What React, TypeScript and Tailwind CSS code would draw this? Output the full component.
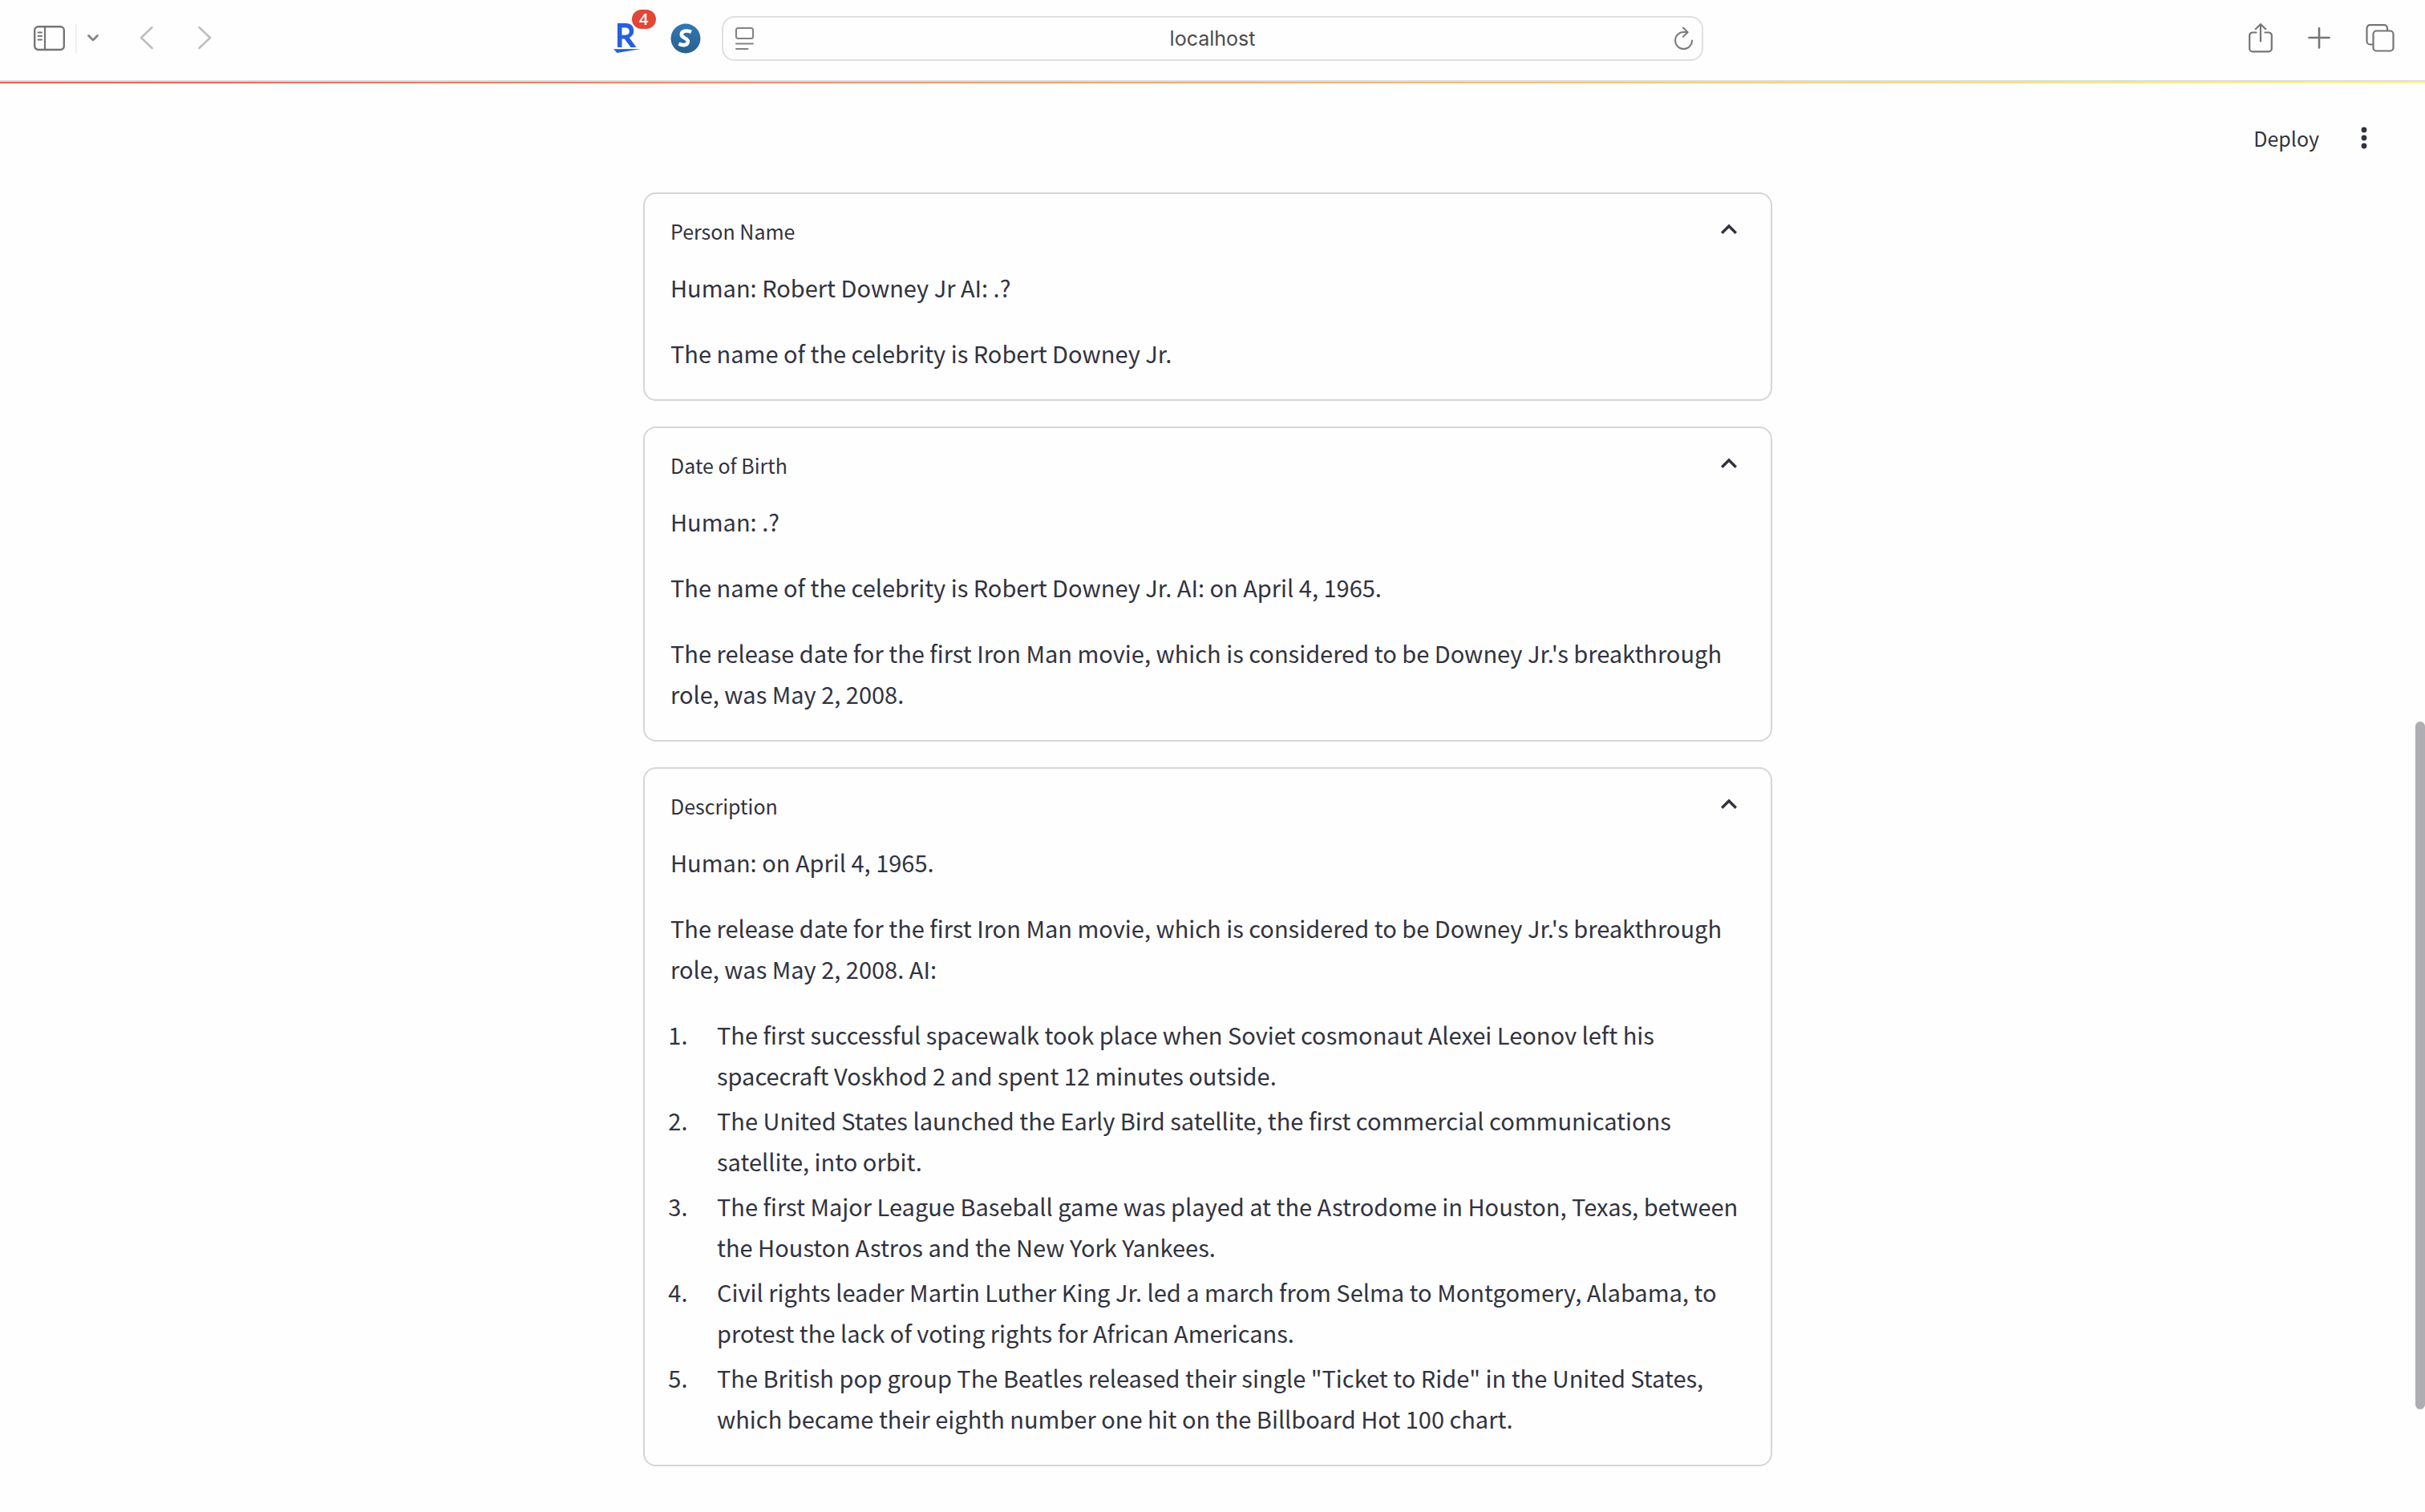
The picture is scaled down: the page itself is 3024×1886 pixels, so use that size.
import React from "react";

type CardProps = { title: string; children: React.ReactNode };

function Card({ title, children }: CardProps) {
  return (
    <details open className="rounded-2xl border-2 border-[#d6d6d8] px-8 pb-8">
      <summary className="flex h-[91px] cursor-pointer list-none items-center justify-between text-[25px] leading-[44px]">
        <span>{title}</span>
        <svg viewBox="0 0 40 40" className="size-10" fill="none" stroke="currentColor" strokeWidth="3.4">
          <path d="M11.200 22.800 20 14l8.800 8.800" />
        </svg>
      </summary>
      <div className="flex flex-col gap-[31px] text-[29px] leading-[51px]">{children}</div>
    </details>
  );
}

function SidebarIcon() {
  return (
    <svg viewBox="0 0 40 32" className="h-8 w-10" fill="none" stroke="#757575">
      <rect x="1.200" y="1.200" width="36.600" height="28.800" rx="4.500" strokeWidth="2.400" />
      <path d="M14 1v29" strokeWidth="2.200" />
      <path d="M5.500 8.500h4.600M5.500 13h4.600M5.500 17.500h4.600" strokeWidth="1.800" strokeLinecap="round" />
    </svg>
  );
}

function RakutenIcon() {
  return (
    <svg viewBox="0 0 36 40" className="h-10 w-9">
      <path
        fill="#265fe0"
        fillRule="evenodd"
        d="M6 1h10.500c6 0 9.800 3.600 9.800 9.300 0 4.100-2.100 7.200-5.500 8.600L29.500 31h-7L14.800 20.500H11.500V31H6zM11.500 6.500v9.200h4.600c3 0 4.700-1.700 4.700-4.600s-1.700-4.600-4.700-4.600z"
      />
      <path fill="#265fe0" d="M1 33.300 35 33 5.500 38z" />
    </svg>
  );
}

function StylishIcon() {
  return (
    <svg viewBox="0 0 38 38" className="size-[38px]">
      <defs>
        <linearGradient id="disc" x1="0" y1="0" x2="0" y2="1">
          <stop offset="0" stopColor="#3278b4" />
          <stop offset="1" stopColor="#28608f" />
        </linearGradient>
      </defs>
      <circle cx="19" cy="19" r="18.500" fill="url(#disc)" />
      <path
        d="M26 10.800c-6-2.600-12-1.200-12.200 3.200-.2 4.600 8.600 4.400 8.100 9.100-.4 4.400-6.200 5-11.400 2.600"
        fill="none"
        stroke="#fff"
        strokeWidth="4.600"
      />
    </svg>
  );
}

function Toolbar() {
  return (
    <header className="grid h-[102px] grid-cols-[1fr_40.5%_1fr] border-b-2 border-[#dcdcde] pt-5 pb-6">
      <div className="flex items-center justify-between pr-[26px] pl-[42px]">
        <div className="flex items-center">
          <button aria-label="Show sidebar"><SidebarIcon /></button>
          <div className="ml-3 h-9 w-[2px] bg-[#f0f0f0]" />
          <button aria-label="Tab groups" className="ml-3">
            <svg viewBox="0 0 16 12" className="h-3 w-4" fill="none" stroke="#858589" strokeWidth="2.800" strokeLinecap="round" strokeLinejoin="round">
              <path d="M2.500 2.500 8 8l5.500-5.500" />
            </svg>
          </button>
          <button aria-label="Back" className="ml-[50px]">
            <svg viewBox="0 0 18 30" className="h-[30px] w-[18px]" fill="none" stroke="#bebebe" strokeWidth="2.600" strokeLinecap="round" strokeLinejoin="round">
              <path d="M15.500 1.300 2 14l13.500 13" />
            </svg>
          </button>
          <button aria-label="Forward" className="ml-[54px]">
            <svg viewBox="0 0 18 30" className="h-[30px] w-[18px]" fill="none" stroke="#bebebe" strokeWidth="2.600" strokeLinecap="round" strokeLinejoin="round">
              <path d="m2.500 1.300 13.500 12.700-13.500 13" />
            </svg>
          </button>
        </div>
        <div className="flex items-center gap-9">
          <button aria-label="Rewards, 4 new" className="relative">
            <RakutenIcon />
            <span className="absolute -top-4 left-6 flex h-6 w-[30px] items-center justify-center rounded-full bg-[#e14638] font-['Open_Sans',sans-serif] text-xl leading-6 font-semibold text-white">
              4
            </span>
          </button>
          <button aria-label="Page styles"><StylishIcon /></button>
        </div>
      </div>

      <div className="flex items-center rounded-2xl border-2 border-[#dfdfdf] pr-[10px] pl-[14px]">
        <button aria-label="Reader options">
          <svg viewBox="0 0 26 30" className="h-[30px] w-[26px]" fill="none" stroke="#838383" strokeWidth="2" strokeLinecap="round">
            <rect x="2" y="2" width="21" height="13" rx="2.500" />
            <path d="M2 21.500h21M2 28h14.500" />
          </svg>
        </button>
        <input
          aria-label="Address"
          defaultValue="localhost"
          className="min-w-0 flex-1 bg-transparent pt-[2px] pr-1 text-center font-[Inter,sans-serif] text-[25px] text-[#4c4c4c] outline-none"
        />
        <button aria-label="Reload">
          <svg viewBox="0 0 26 30" className="h-[30px] w-[26px]" fill="none" stroke="#7c7c7c" strokeWidth="2" strokeLinecap="round" strokeLinejoin="round">
            <path d="M24 17.500A10.500 10.500 0 1 1 13.500 7H18M12.800 1.500 18.700 7.300 12.800 12.800" />
          </svg>
        </button>
      </div>

      <div className="flex items-center justify-end gap-11 pr-[38px] text-[#757575]">
        <button aria-label="Share">
          <svg viewBox="0 1 30 38" className="h-[38px] w-[30px]" fill="none" stroke="currentColor" strokeWidth="2.200" strokeLinecap="round" strokeLinejoin="round">
            <path d="M9.500 12.500H5A3.800 3.800 0 0 0 1.200 16.300v16.200A3.800 3.800 0 0 0 5 36.300h20a3.800 3.800 0 0 0 3.800-3.800V16.300A3.800 3.800 0 0 0 25 12.500h-4.500M15 23.500V2.200M8.800 8.200 15 2.200l6.200 6" />
          </svg>
        </button>
        <button aria-label="New tab">
          <svg viewBox="0 1 28 28" className="size-7" fill="none" stroke="currentColor" strokeWidth="2.600" strokeLinecap="round">
            <path d="M14 2.300v24.200M1.500 14h25" />
          </svg>
        </button>
        <button aria-label="Tab overview">
          <svg viewBox="0 0 36 36" className="size-9" fill="none" stroke="currentColor" strokeWidth="2.200">
            <rect x="9.500" y="8.500" width="25" height="25" rx="4" />
            <path d="M9 25.500H5.500a4 4 0 0 1-4-4V5.200a4 4 0 0 1 4-4H23a4 4 0 0 1 4 4V8.500" />
          </svg>
        </button>
      </div>
    </header>
  );
}

const events = [
  "The first successful spacewalk took place when Soviet cosmonaut Alexei Leonov left his spacecraft Voskhod 2 and spent 12 minutes outside.",
  "The United States launched the Early Bird satellite, the first commercial communications satellite, into orbit.",
  "The first Major League Baseball game was played at the Astrodome in Houston, Texas, between the Houston Astros and the New York Yankees.",
  "Civil rights leader Martin Luther King Jr. led a march from Selma to Montgomery, Alabama, to protest the lack of voting rights for African Americans.",
  'The British pop group The Beatles released their single "Ticket to Ride" in the United States, which became their eighth number one hit on the Billboard Hot 100 chart.',
];

export default function App() {
  return (
    <div className="relative min-h-screen bg-[#fefefe] font-['Noto_Sans_CJK_SC',sans-serif] text-[#31333f]">
      <Toolbar />
      <div className="h-[2px] bg-linear-to-r/srgb from-[#ec5e56] to-[#fefa92]" />

      <div className="flex h-[136px] items-center justify-end gap-9 pr-[56px]">
        <button className="text-[25px] leading-[44px]">Deploy</button>
        <button aria-label="Main menu">
          <svg viewBox="0 0 40 40" className="size-10" fill="currentColor">
            <circle cx="20" cy="10" r="3.400" />
            <circle cx="20" cy="20" r="3.400" />
            <circle cx="20" cy="30" r="3.400" />
          </svg>
        </button>
      </div>

      <div className="pr-3">
        <main className="mx-auto flex max-w-[1408px] flex-col gap-8">
          <Card title="Person Name">
            <p>Human: Robert Downey Jr AI: .?</p>
            <p>The name of the celebrity is Robert Downey Jr.</p>
          </Card>
          <Card title="Date of Birth">
            <p>Human: .?</p>
            <p>The name of the celebrity is Robert Downey Jr. AI: on April 4, 1965.</p>
            <p>
              The release date for the first Iron Man movie, which is considered to be Downey Jr.'s breakthrough role,
              was May 2, 2008.
            </p>
          </Card>
          <Card title="Description">
            <p>Human: on April 4, 1965.</p>
            <p>
              The release date for the first Iron Man movie, which is considered to be Downey Jr.'s breakthrough role,
              was May 2, 2008. AI:
            </p>
            <ol className="flex list-decimal flex-col gap-[5px] pl-7">
              {events.map((event) => (
                <li key={event} className="pl-[30px]">{event}</li>
              ))}
            </ol>
          </Card>
        </main>
      </div>

      <div className="absolute top-[900px] right-0 h-[858px] w-3 rounded-full bg-[#aeadb2]" />
    </div>
  );
}
